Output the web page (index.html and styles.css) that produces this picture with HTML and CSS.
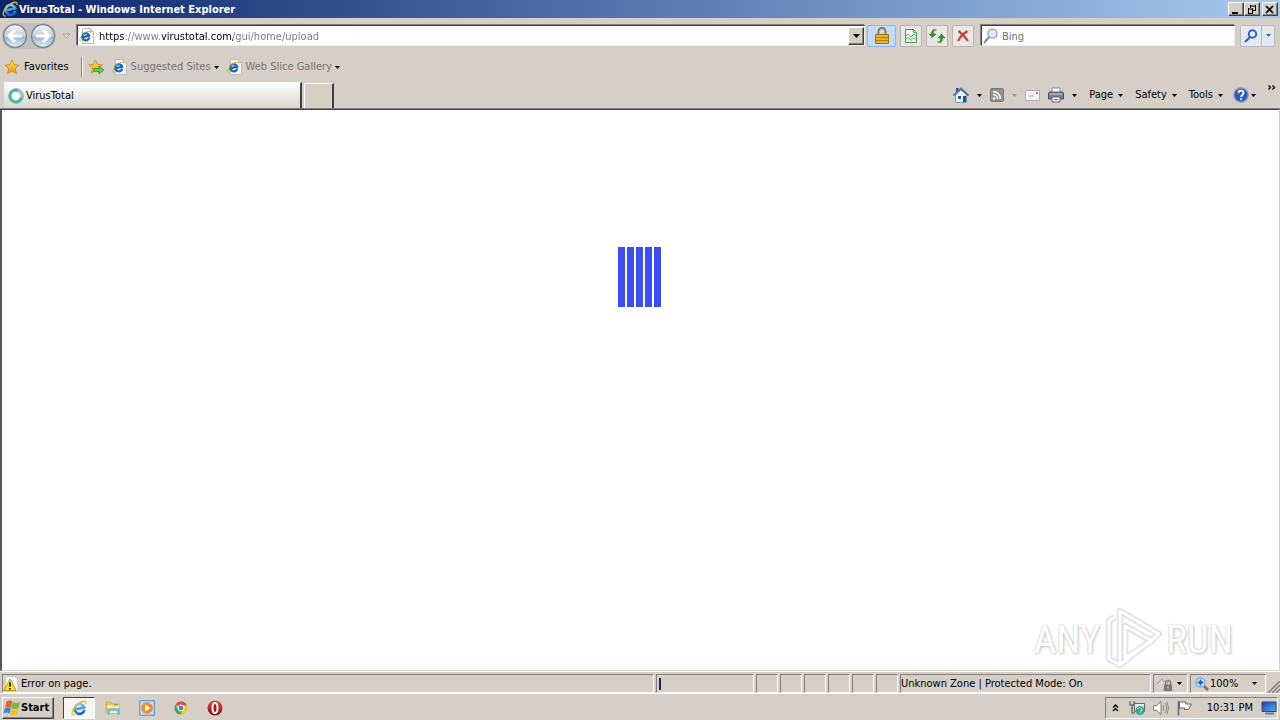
FILE: index.html
```html
<!DOCTYPE html>
<html lang="en">
<head>
<meta charset="utf-8">
<title>VirusTotal - Windows Internet Explorer</title>
<link rel="stylesheet" href="styles.css">
</head>
<body>
<svg class="defs" aria-hidden="true">
  <defs>
    <linearGradient id="blueE" x1="0" y1="0" x2="0" y2="1"><stop offset="0" stop-color="#6fd3fa"/><stop offset="1" stop-color="#1263bd"/></linearGradient>
    <linearGradient id="gold" x1="0" y1="0" x2="0" y2="1"><stop offset="0" stop-color="#ffe56b"/><stop offset="1" stop-color="#f0920a"/></linearGradient>
    <linearGradient id="orb" x1="0" y1="0" x2="0" y2="1"><stop offset="0" stop-color="#f4f7fa"/><stop offset=".5" stop-color="#c3ced9"/><stop offset=".55" stop-color="#a3b6c9"/><stop offset="1" stop-color="#d8f4ff"/></linearGradient>
    <linearGradient id="red" x1="0" y1="0" x2="0" y2="1"><stop offset="0" stop-color="#e8483c"/><stop offset="1" stop-color="#8c0808"/></linearGradient>
    <linearGradient id="screen" x1="0" y1="0" x2="1" y2="1"><stop offset="0" stop-color="#1746a8"/><stop offset="1" stop-color="#5ea4ee"/></linearGradient>
  </defs>
  <symbol id="ie" viewBox="0 0 16 16">
    <g transform="rotate(-14 8 8)"><path d="M12.800 11A4.900 4.900 0 1 1 13.200 8.600H5" fill="none" stroke="url(#blueE)" stroke-width="2.700"/></g>
    <path d="M3.600 15C-.5 15.500.800 9 6 4.800S15.800-.300 15 4.200" fill="none" stroke="#f2b91d" stroke-width="1.300"/>
  </symbol>
  <symbol id="iepage" viewBox="0 0 16 16">
    <path d="M3.500.500h8l3 3v12h-11z" fill="#fff" stroke="#b4b8bf"/><path d="M11.500.500v3h3" fill="#dde" stroke="#b4b8bf"/>
    <g transform="rotate(-14 6 8)"><path d="M9.800 10.600A3.600 3.600 0 1 1 10.200 8.700H4" fill="none" stroke="#1767b8" stroke-width="2.200"/></g>
    <path d="M2 13.500C-.5 13 1.500 8.500 5 5.500s7-3 6.600-.200" fill="none" stroke="#e3ad1c"/>
  </symbol>
  <symbol id="star" viewBox="0 0 16 16"><path d="M8 1l2.100 4.700 5 .500-3.800 3.400 1.100 5L8 12.100 3.600 14.600l1.100-5L.9 6.200l5-.5z" fill="url(#gold)" stroke="#d98208" stroke-width=".8"/></symbol>
  <symbol id="caret" viewBox="0 0 5 3"><path d="M0 0h5L2.500 3z" fill="currentColor"/></symbol>
</svg>

<div class="window">
  <header class="title">
    <svg class="i16"><use href="#ie"/></svg>
    <h1>VirusTotal - Windows Internet Explorer</h1>
    <div class="winbtns">
      <button aria-label="Minimize"><svg width="10" height="9"><path d="M1 7h6v2H1z"/></svg></button>
      <button aria-label="Restore"><svg width="10" height="9"><path d="M3 1h6M3.500 0v3M8.500 0v6M6 5.500h3M1 4h5M1.500 3v6M5.500 3v6M1 8.500h5" stroke="#000" fill="none"/></svg></button>
      <button class="close" aria-label="Close"><svg width="10" height="9"><path d="M1 1l7 7M8 1L1 8" stroke="#000" stroke-width="1.700"/></svg></button>
    </div>
  </header>

  <nav class="navrow" aria-label="Navigation">
    <div class="travel">
      <button aria-label="Back"><svg width="26" height="26" viewBox="0 0 26 26"><circle cx="13" cy="13" r="11.500" fill="url(#orb)" stroke="#7f8894" stroke-width="1.500"/><path d="M13 7l-6 6 6 6M7.500 13H20" fill="none" stroke="#fff" stroke-width="3"/></svg></button>
      <button aria-label="Forward"><svg width="26" height="26" viewBox="0 0 26 26"><circle cx="13" cy="13" r="11.500" fill="url(#orb)" stroke="#7f8894" stroke-width="1.500"/><path d="M13 7l6 6-6 6M18.500 13H6" fill="none" stroke="#fff" stroke-width="3"/></svg></button>
    </div>
    <button class="recent" aria-label="Recent pages"><svg width="9" height="6"><path d="M1 1h7L4.500 5z" fill="#e4e0da" stroke="#aaa59e"/></svg></button>
    <div class="field address">
      <svg class="i16"><use href="#iepage"/></svg>
      <input class="url" type="text" aria-label="Address" value="https://www.virustotal.com/gui/home/upload">
      <button class="drop" aria-label="Show address list"><svg width="7" height="4"><path d="M0 0h7L3.500 4z"/></svg></button>
    </div>
    <button class="tool lock" aria-label="Security report"><svg width="16" height="18" viewBox="0 0 16 18"><path d="M4.500 9V4.500a3.500 3.500 0 0 1 7 0V9" fill="none" stroke="#8a7b50" stroke-width="2"/><path d="M1.500 7.500h13v9h-13z" fill="#e9b52c" stroke="#a87308"/><path d="M2 10.500h12M2 13.500h12" stroke="#b47e10"/></svg></button>
    <button class="tool" aria-label="Compatibility view"><svg width="14" height="16" viewBox="0 0 14 16"><path d="M1.500 1.500h8l3 3v10h-11z" fill="#f3f8f2" stroke="#4b9a52"/><path d="M9.500 1.500v3h3M1 8.500l3-2.500 3 3 3-3 3 2.500M1 12l3-2.500 3 3 3-3 3 2.500" fill="none" stroke="#55a35a"/></svg></button>
    <button class="tool" aria-label="Refresh"><svg width="16" height="16" viewBox="0 0 16 16"><path d="M7.500 2C4.500 2 4.500 4 4.500 6H7L3.500 9.500 0 6h2.500C2.500 2 4 .5 7.500 2zM8.500 14c3 0 3-2 3-4H9l3.500-4L16 10h-2.500c0 4-1.500 5.500-5 4z" fill="#359536" stroke="#18731d" stroke-width=".5"/></svg></button>
    <button class="tool" aria-label="Stop"><svg width="12" height="12" viewBox="0 0 12 12"><path d="M1.500 1Q7 5 11 11M10.500 1Q4 5 1 11" fill="none" stroke="#c94248" stroke-width="2.200"/></svg></button>
    <div class="field search">
      <svg class="i16" viewBox="0 0 16 16"><circle cx="9.500" cy="5.500" r="4.500" fill="#e0edf7" stroke="#9cabbd" stroke-width="1.500"/><path d="M6 9l-5 6" stroke="#889" stroke-width="2"/></svg>
      <input type="text" aria-label="Search" placeholder="Bing">
    </div>
    <div class="go">
      <button class="find" aria-label="Search the web"><svg width="14" height="14" viewBox="0 0 14 14"><circle cx="8.500" cy="5" r="3.700" fill="#e6f3ff" stroke="#2963bd" stroke-width="2"/><path d="M6 8l-5 5" stroke="#2963bd" stroke-width="2.200"/></svg></button>
      <button class="more" aria-label="Search options"><svg class="caret"><use href="#caret"/></svg></button>
    </div>
  </nav>

  <div class="favrow">
    <button class="fav"><svg class="i16"><use href="#star"/></svg>Favorites</button>
    <span class="sep"></span>
    <button class="add" aria-label="Add to Favorites Bar"><svg class="i16" viewBox="0 0 16 16"><use href="#star" width="15" height="15"/><path d="M6 9.500h5V7l5 4-5 4v-2.500H6z" fill="#62c94b" stroke="#2e8a25" stroke-width=".7"/></svg></button>
    <button class="link"><svg class="i16"><use href="#iepage"/></svg>Suggested Sites<svg class="caret"><use href="#caret"/></svg></button>
    <button class="link"><svg class="i16"><use href="#iepage"/></svg>Web Slice Gallery<svg class="caret"><use href="#caret"/></svg></button>
  </div>

  <div class="tabrow">
    <button class="tab"><svg class="i16" viewBox="0 0 16 16"><circle cx="8" cy="8" r="5.800" fill="#fff" stroke="#a6c4cc" stroke-width="3.500"/><path d="M10 2.300A6 6 0 1 0 13.500 10" fill="none" stroke="#3ebda2" stroke-width="2.500"/><circle cx="8" cy="8" r="7.300" fill="none" stroke="#849fa9" stroke-width=".7"/></svg>VirusTotal</button>
    <button class="newtab" aria-label="New tab"></button>
    <div class="commands">
      <button class="icon" aria-label="Home"><svg class="i16" viewBox="0 0 16 16"><path d="M2.500 8v7.500h11V8L8 3z" fill="#f5f9ff" stroke="#7793b5"/><path d="M3 1h2.500v4H3z" fill="#28489a"/><path d="M.5 8.500L8 1.500l7.500 7" fill="none" stroke="#5375a8" stroke-width="1.800"/><path d="M5 9h3v3H5zM10 9h3v6h-3z" fill="#255393"/></svg><svg class="caret"><use href="#caret"/></svg></button>
      <button class="icon dim" aria-label="Feeds"><svg width="14" height="14" viewBox="0 0 14 14"><rect x=".5" y=".5" width="13" height="13" rx="1.500" fill="#929292" stroke="#777"/><circle cx="4" cy="10.500" r="1.300" fill="#fff"/><path d="M3 6.500a4.500 4.500 0 0 1 4.500 4.500M3 3.500a7.500 7.500 0 0 1 7.500 7.500" fill="none" stroke="#fff" stroke-width="1.500"/></svg><svg class="caret"><use href="#caret"/></svg></button>
      <button class="icon" aria-label="Read mail"><svg width="15" height="11" viewBox="0 0 15 11"><path d="M.5.500h14v10H.5z" fill="#f3f1f3" stroke="#b3adb6"/><path d="M11 2h2v2h-2z" fill="#d36572"/><path d="M4 6h5" stroke="#aaa5ba"/></svg></button>
      <button class="icon" aria-label="Print"><svg class="i16" viewBox="0 0 16 16"><path d="M4 1h8v5H4z" fill="#fff" stroke="#899"/><path d="M.5 6.500Q.5 5 2 5h12q1.500 0 1.500 1.500V12H.5z" fill="#77818c" stroke="#4c5660"/><path d="M2 7h12" stroke="#d3d8dc"/><path d="M4 10h8v5H4z" fill="#f4f4f4" stroke="#667"/><path d="M6 12.500h4" stroke="#5685ab"/></svg><svg class="caret"><use href="#caret"/></svg></button>
      <button>Page<svg class="caret"><use href="#caret"/></svg></button>
      <button>Safety<svg class="caret"><use href="#caret"/></svg></button>
      <button>Tools<svg class="caret"><use href="#caret"/></svg></button>
      <button class="help" aria-label="Help"><svg class="i16" viewBox="0 0 16 16"><circle cx="8" cy="8" r="7" fill="#275bbd" stroke="#8195b8" stroke-width="1.500"/><path d="M5.500 6.200C5.500 2.800 10.500 3 10.500 6c0 2-2.400 1.900-2.400 4M8 11.300v1.800" fill="none" stroke="#fff" stroke-width="1.800"/></svg><svg class="caret"><use href="#caret"/></svg></button>
      <button class="chevron" aria-label="More commands"><svg width="8" height="5"><path d="M.5.500l2 2-2 2M4.500.500l2 2-2 2" fill="none" stroke="#000" stroke-width="1.300"/></svg></button>
    </div>
  </div>

  <main class="page">
    <div class="loader" role="progressbar" aria-label="Loading"><i></i><i></i><i></i><i></i><i></i></div>
    <div class="mark">
      <span>ANY</span>
      <svg width="58" height="62" viewBox="0 0 58 62"><g fill="none" stroke-linejoin="round"><path d="M16 4l39 23-39 31zM11 10L5 14v38l11 6M21 19l27 15-27 17z" stroke="#ececec" stroke-width="7"/><path d="M16 4l39 23-39 31zM11 10L5 14v38l11 6M21 19l27 15-27 17z" stroke="#dedede" stroke-width="5"/><path d="M16 4l39 23-39 31zM11 10L5 14v38l11 6M21 19l27 15-27 17z" stroke="#fff" stroke-width="3"/></g></svg>
      <span>RUN</span>
    </div>
  </main>

  <footer class="status">
    <div class="cell message"><svg class="i16" viewBox="0 0 16 16"><path d="M2.500.500h9l3 3v12h-12z" fill="#fff" stroke="#ccc"/><path d="M7 3L.8 14.500h12.400z" fill="#ffdf16" stroke="#b69a12"/><path d="M7 6.500v4M7 12v1.500" stroke="#111" stroke-width="1.700"/></svg>Error on page.</div>
    <div class="cell load"><i></i></div>
    <div class="cell slot"></div><div class="cell slot"></div><div class="cell slot"></div><div class="cell slot"></div><div class="cell slot"></div><div class="cell slot"></div>
    <div class="cell zone">Unknown Zone | Protected Mode: On</div>
    <button class="cell filter" aria-label="InPrivate filtering"><svg class="i16" viewBox="0 0 16 16"><path d="M0 8l5-5 2 3 5-2-2 4" fill="#d8d8d8" stroke="#999"/><path d="M8.500 9V7a2.500 2.500 0 0 1 5 0v2" fill="none" stroke="#888" stroke-width="1.500"/><path d="M7 8.500h8V15H7z" fill="#777"/><path d="M11 10v3" stroke="#ddd"/></svg><svg class="caret"><use href="#caret"/></svg></button>
    <button class="cell zoom"><svg width="14" height="14" viewBox="0 0 14 14"><path d="M8 8l5 5" stroke="#a66a43" stroke-width="2.500"/><circle cx="5.500" cy="5.500" r="4.500" fill="#e2f3ff" stroke="#83aede" stroke-width="1.500"/><path d="M5.500 2.500v6M2.500 5.500h6" stroke="#1e5cc2" stroke-width="2"/></svg>100%<svg class="caret"><use href="#caret"/></svg></button>
    <svg class="grip" width="12" height="12"><path d="M0 12L12 0M4 12l8-8M8 12l4-4" stroke="#85817a" stroke-width="1.500"/></svg>
  </footer>
</div>

<div class="taskbar">
  <button class="start"><svg width="18" height="17" viewBox="0 0 18 17"><path d="M3.500 2.500q3-2 6 0L8 8.500q-3-1.500-6 0z" fill="#e9602f"/><path d="M10 3q3 2 7 0l-1.500 6q-3.500 2-7 0z" fill="#75b83c"/><path d="M1.800 9.200q3-1.700 6 0L6.500 14.500q-3-2-6.300 0z" fill="#3a86d8"/><path d="M8.300 9.800q3.500 2 7 0L14 15.500q-3.500 2-7 0z" fill="#f7bd28"/></svg>Start</button>
  <button class="app active" aria-label="Internet Explorer"><svg class="i16"><use href="#ie"/></svg></button>
  <button class="app" aria-label="Windows Explorer"><svg class="i16" viewBox="0 0 16 16"><path d="M1 2h5l1 2h7v9H1z" fill="#e6c45b" stroke="#c9a540" stroke-width=".7"/><path d="M2 5h12v8H2z" fill="#faeca5"/><path d="M3.500 15V9.500h10V15" fill="none" stroke="#70b9e5" stroke-width="2.500"/><path d="M9 5h4" stroke="#49a95e"/></svg></button>
  <button class="app" aria-label="Media Player"><svg class="i16" viewBox="0 0 16 16"><path d="M.7.700h14.600v14.600H.7z" fill="#b9dbf5" stroke="#4e94cf"/><circle cx="8" cy="8" r="5.800" fill="#f68b1d"/><path d="M6 4.500l5.500 3.500L6 11.500z" fill="#fff"/></svg></button>
  <button class="app" aria-label="Chrome"><svg width="14" height="14" viewBox="0 0 14 14"><circle cx="7" cy="7" r="6.500" fill="#f6c52c"/><path d="M7 7L1.400 3.700A6.500 6.500 0 0 1 13 4.500H7z" fill="#dc4c3f"/><path d="M1.400 3.700L7 13.500A6.500 6.500 0 0 1 1.400 3.700zM7 13.500l1.500-4L5 8z" fill="#35a55a"/><circle cx="7" cy="7" r="3" fill="#4285d8" stroke="#fff"/></svg></button>
  <button class="app" aria-label="Opera"><svg class="i16" viewBox="0 0 16 16"><circle cx="8" cy="8" r="7.500" fill="url(#red)"/><ellipse cx="8" cy="8" rx="2.500" ry="5" fill="#b3140f" stroke="#fff" stroke-width="2"/></svg></button>
  <div class="tray">
    <button aria-label="Show hidden icons"><svg width="7" height="8"><path d="M1 3.500l2.500-2.500L6 3.500M1 7l2.500-2.500L6 7" fill="none" stroke="#000" stroke-width="1.300"/></svg></button>
    <svg class="i16 network" viewBox="0 0 16 16"><path d="M1 1v4h4V1M3 5v8h3" fill="none" stroke="#555" stroke-width="1.200"/><path d="M5.500 3.500h10v8h-10z" fill="#e9eded" stroke="#666"/><circle cx="11" cy="10.500" r="4.500" fill="#37a58d"/><path d="M8 9q3-3 5 0l-2 4" fill="none" stroke="#c6f3df"/></svg>
    <svg class="i16" viewBox="0 0 16 16"><path d="M.7 5.500h3L8 1.500v13l-4.300-4h-3z" fill="#fff" stroke="#777"/><path d="M10 5q2 3 0 6M12 3q3.500 5 0 10M14 1.500q3 6.500 0 13" fill="none" stroke="#888"/></svg>
    <svg class="i16" viewBox="0 0 16 16"><path d="M1.500 1v14.500" stroke="#666" stroke-width="1.500"/><path d="M2.500 2h6v2h6l-3 5.500H7.500V8h-5z" fill="#fff" stroke="#666"/></svg>
    <time>10:31 PM</time>
    <svg class="i16" viewBox="0 0 16 16"><path d="M1 2h14v9.500H1z" fill="url(#screen)" stroke="#234b91"/><path d="M4 13.500h9" stroke="#6a7d99" stroke-width="2"/></svg>
  </div>
</div>
</body>
</html>
```
FILE: styles.css
```css
* { box-sizing: border-box; }
body { margin: 0; height: 100vh; display: flex; flex-direction: column; overflow: hidden; background: #d5cfc7; color: #000; font: 11px/14px "DejaVu Sans Condensed", "DejaVu Sans", sans-serif; }
button, input { font: inherit; color: inherit; }
button { margin: 0; padding: 0; border: 0; background: none; display: flex; align-items: center; white-space: nowrap; }
svg { display: block; flex: none; }
.defs { position: absolute; width: 0; height: 0; }
.i16 { width: 16px; height: 16px; }
.caret { width: 5px; height: 3px; }
.window { flex: 1; min-height: 0; display: flex; flex-direction: column; }

.title { height: 18px; flex: none; display: flex; align-items: center; gap: 1px; padding: 0 2px; background: linear-gradient(90deg, #0a246a, #a6caf0); color: #fff; }
.title h1 { margin: 0; padding-top: 2px; flex: 1; font-size: 11px; font-weight: bold; }
.winbtns { display: flex; }
.winbtns button { width: 16px; height: 14px; justify-content: center; background: #d5cfc7; border: 1px solid; border-color: #fff #404040 #404040 #fff; box-shadow: inset -1px -1px #85817a; }
.winbtns .close { margin-left: 2px; }

.navrow { height: 35px; flex: none; display: flex; align-items: center; padding: 0 5px 0 2px; }
.travel { display: flex; gap: 2px; border-radius: 14px; background: #c3c0bf; }
.recent { width: 21px; justify-content: center; }
.field { height: 21px; display: flex; align-items: center; background: #fff; border: 1px solid; border-color: #404040 #eee #eee #404040; box-shadow: -1px -1px #85817a; }
.field input { flex: 1; min-width: 0; height: 17px; padding: 1px 0 0; border: 0; outline: 0; background: none; }
.address { flex: 1; padding-left: 1px; gap: 4px; }
.field .url { background: linear-gradient(90deg, #000 26px, #777 26px 63px, #000 63px 134px, #777 134px); -webkit-background-clip: text; background-clip: text; color: transparent; }
.drop { width: 16px; height: 18px; justify-content: center; background: #d5cfc7; border: 1px solid; border-color: #fff #404040 #404040 #fff; box-shadow: inset -1px -1px #85817a; }
.tool { width: 22px; height: 22px; margin-left: 4px; justify-content: center; border: 1px solid #b7b5b2; border-radius: 2px; background: #e9e6e3; }
.lock { width: 29px; margin-left: 2px; border-color: #91b3df; background: #c2dcff; }
.search { width: 254px; margin-left: 7px; padding-left: 1px; gap: 3px; }
.search input::placeholder { color: #6d6d6d; opacity: 1; }
.go { display: flex; height: 22px; margin-left: 5px; border: 1px solid #b5b8bd; border-radius: 2px; background: #e4e9f1; }
.find { width: 20px; justify-content: center; }
.more { width: 13px; justify-content: center; color: #2963bd; border-left: 1px solid #b5b8bd; }

.favrow { height: 28px; flex: none; display: flex; align-items: center; padding-left: 4px; }
.fav, .link { gap: 4px; }
.sep { width: 2px; height: 20px; margin: 0 5px 0 12px; border-left: 1px solid #85817a; border-right: 1px solid #fff; }
.link { margin-left: 8px; gap: 3px; color: #77736e; }
.link .caret { color: #000; }

.tabrow { height: 28px; flex: none; display: flex; align-items: flex-end; padding-left: 4px; border-bottom: 1px solid #85817a; }
.tab { width: 298px; height: 26px; padding: 1px 0 0 4px; gap: 2px; background: linear-gradient(#fff, #dad5ce); border-right: 2px solid #404040; border-top: 1px solid #fff; }
.newtab { width: 30px; height: 25px; margin-left: 2px; border: 1px solid #fff; border-bottom: 0; border-right: 2px solid #404040; }
.commands { flex: 1; height: 26px; display: flex; align-items: center; justify-content: flex-end; padding: 0 4px 0 0; gap: 12px; }
.commands button { gap: 5px; }
.commands .icon { gap: 8px; }
.commands .icon + .icon { margin-left: -4px; }
.dim .caret { color: #98948e; }
.commands .help { gap: 2px; margin-left: -2px; }
.commands .chevron { align-self: flex-start; padding-top: 3px; }

.page { flex: 1; min-height: 0; position: relative; display: flex; justify-content: center; align-items: flex-start; padding: 137px 2px 0 0; background: #fff; border: 1px solid #404040; border-right-color: #d5cfc7; border-bottom-color: #d5cfc7; border-left: 2px solid #555; }
.loader { display: flex; gap: 2px; }
.loader i { width: 7px; height: 60px; background: #3b4ff5; }
.mark { position: absolute; right: 46px; bottom: 0; display: flex; align-items: center; gap: 4px; color: #fff; font: 39px/60px "Liberation Sans Narrow", "Roboto Condensed", "Liberation Sans", sans-serif; text-shadow: 0 0 2px #bbb, 1px 1px 3px #ccc; }
.mark span { padding-top: 4px; }

.status { height: 23px; flex: none; display: flex; align-items: center; gap: 2px; padding: 1px 0 0 2px; border-top: 1px solid #fff; border-bottom: 1px solid #fff; }
.cell { height: 19px; display: flex; align-items: center; padding-top: 1px; border: 1px solid; border-color: #85817a #fff #fff #85817a; }
.message { flex: 1; gap: 2px; }
.load { width: 98px; padding-left: 2px; }
.load i { width: 2px; height: 12px; background: #15285f; }
.slot { width: 22px; }
.zone { width: 251px; }
.filter { width: 35px; padding-left: 3px; gap: 4px; }
.zoom { width: 76px; padding-left: 4px; gap: 1px; }
.zoom .caret { margin-left: 13px; }
.grip { align-self: flex-end; }

.taskbar { height: 26px; flex: none; display: flex; align-items: center; padding: 0 2px; border-top: 1px solid #d5cfc7; }
.start { width: 52px; height: 22px; font-weight: bold; border: 1px solid; border-color: #fff #404040 #404040 #fff; box-shadow: inset -1px -1px #85817a; }
.app { width: 32px; height: 22px; margin-left: 2px; justify-content: center; }
.start + .app { margin-left: 9px; }
.active { background: #f7f5f3; border: 1px solid; border-color: #404040 #fff #fff #404040; }
.tray { height: 22px; margin-left: auto; padding: 0 0 0 6px; display: flex; align-items: center; gap: 8px; border: 1px solid; border-color: #85817a #fff #fff #85817a; }
.tray .network { margin-left: 2px; }
.tray time { margin-left: 6px; }
```
